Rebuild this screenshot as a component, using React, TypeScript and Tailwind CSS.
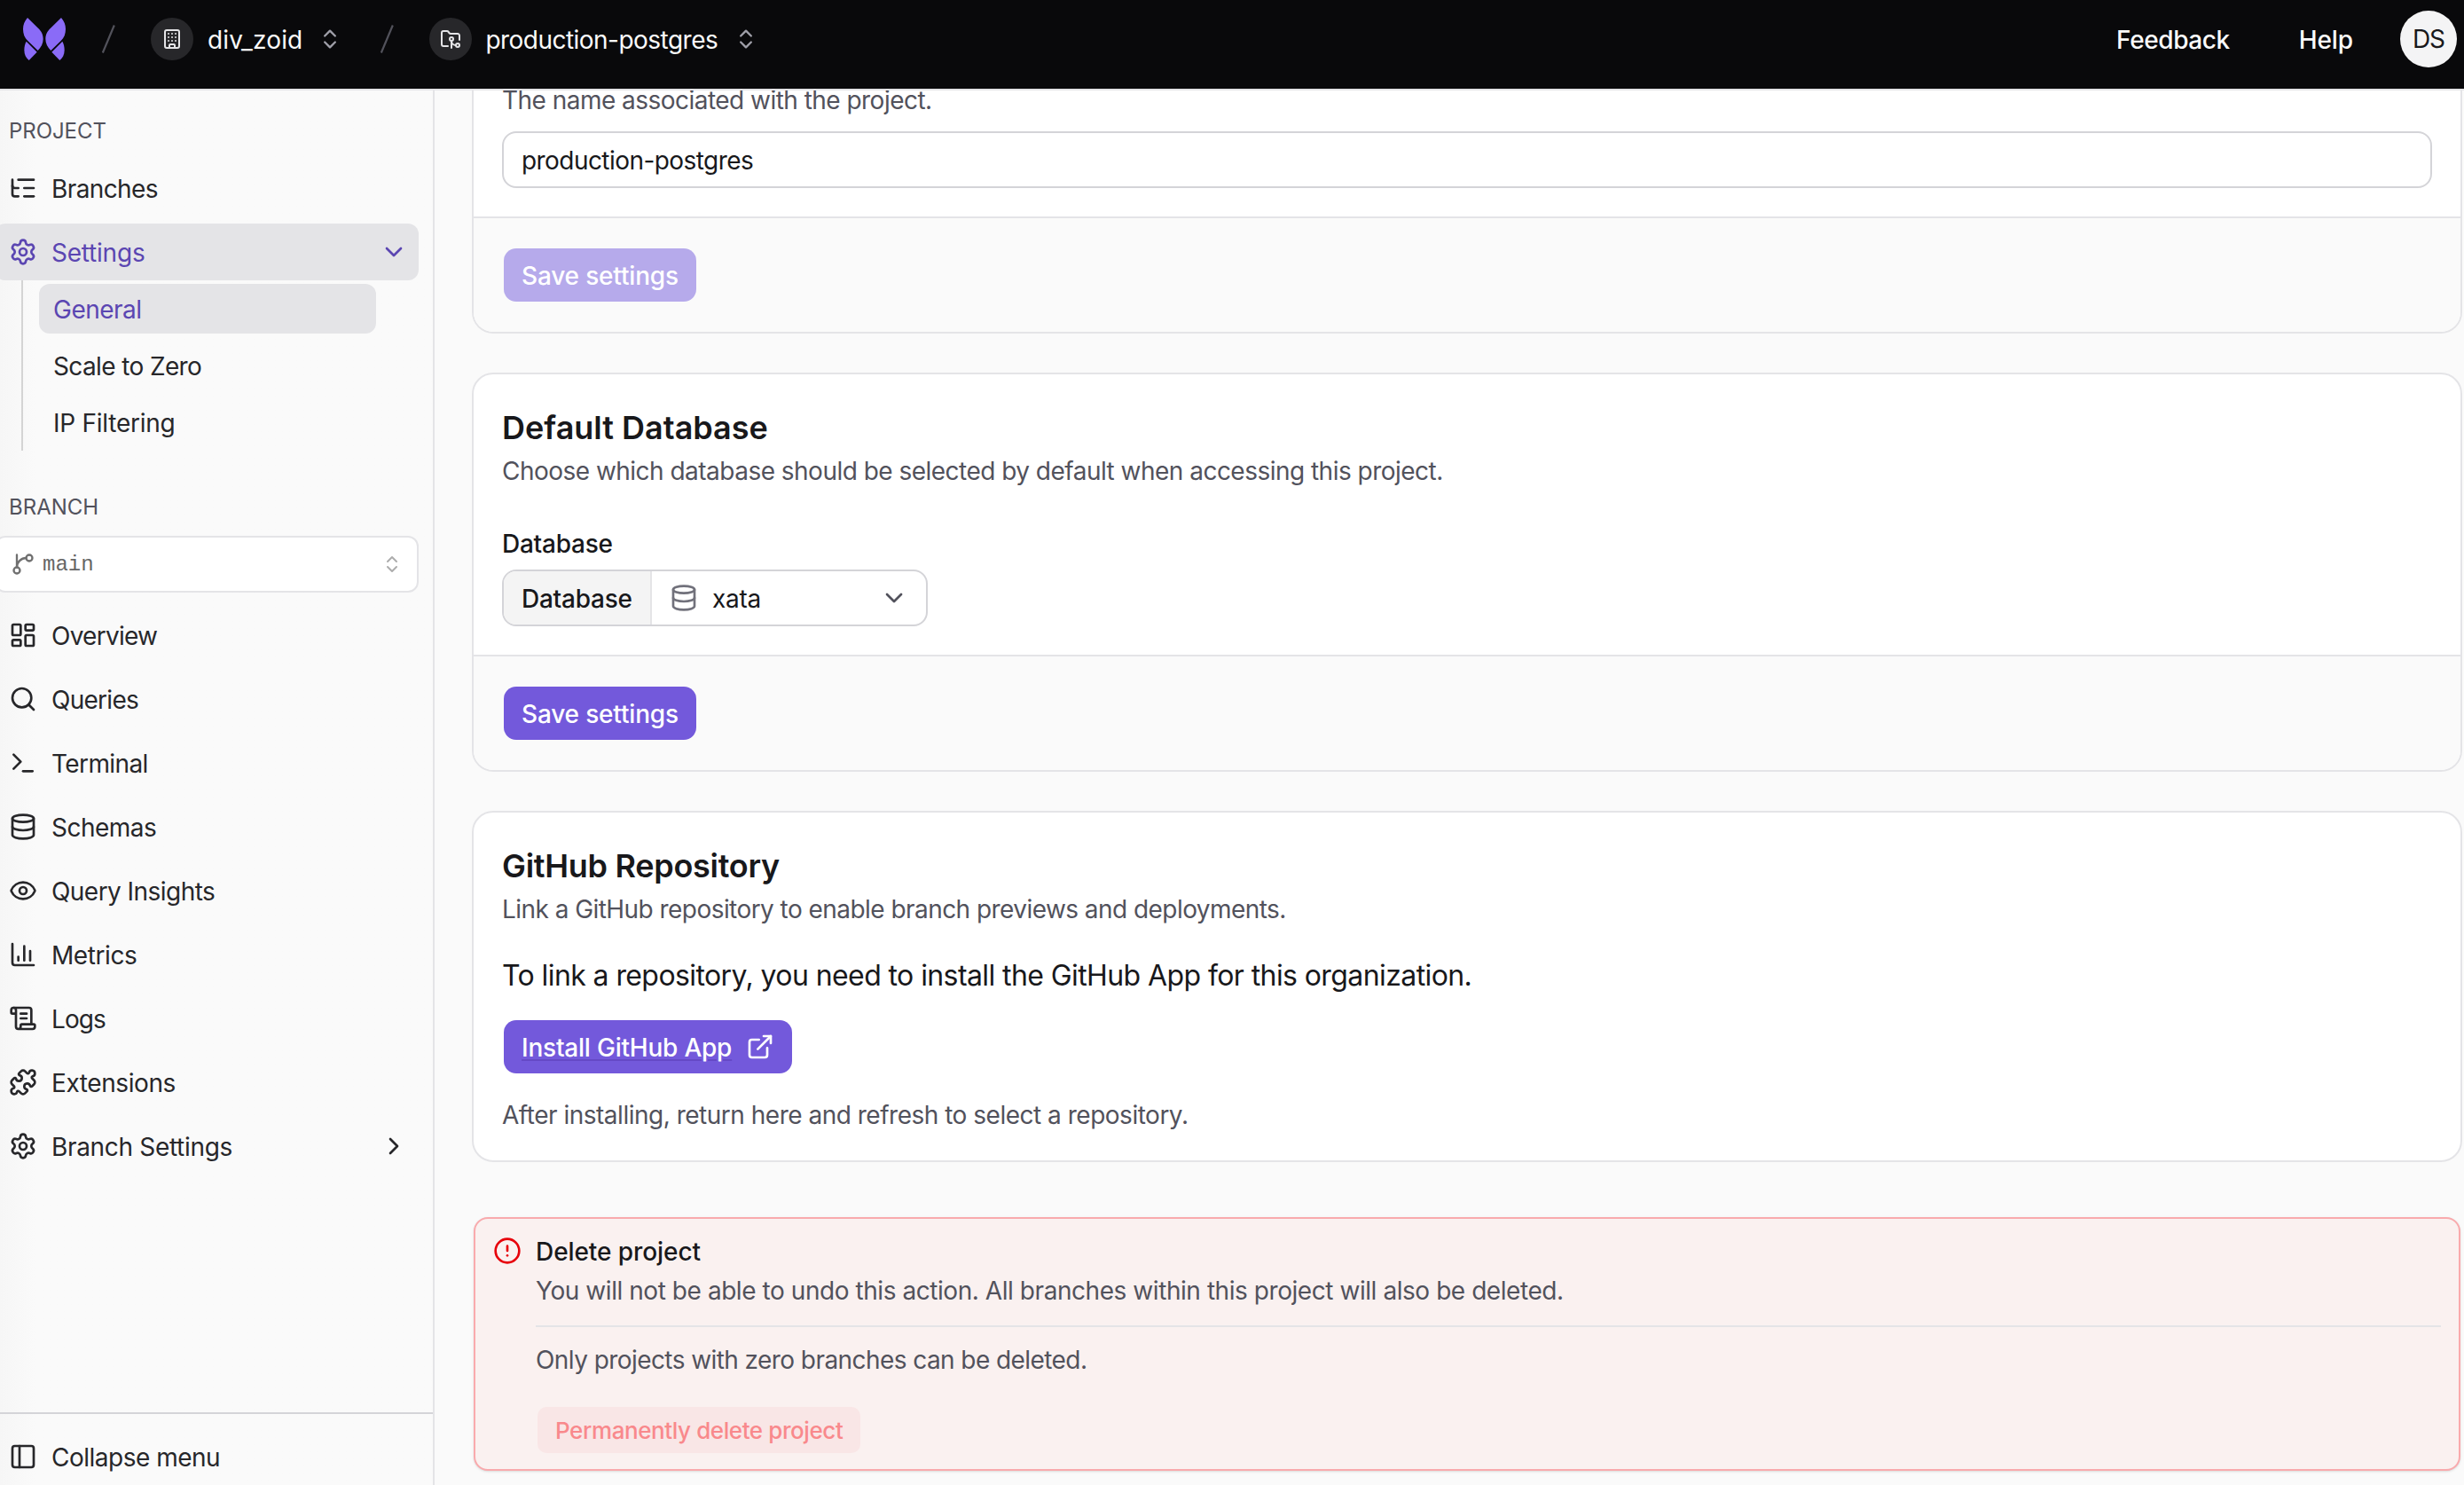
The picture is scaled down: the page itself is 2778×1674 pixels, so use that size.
import type { ReactNode } from "react";
import {
  Building,
  ChevronDown,
  ChevronRight,
  CircleAlert,
  Database,
  ExternalLink,
  Eye,
  FolderGit2,
  LayoutDashboard,
  ListTree,
  PanelLeft,
  Puzzle,
  ScrollText,
  Search,
  Settings,
  type LucideIcon,
} from "lucide-react";

function Logo() {
  return (
    <svg viewBox="48 30 144 144" className="size-12 shrink-0" fill="#8a6bf7">
      <path d="M63 30C53 42 48 54 48 68C48 84 53 98 64 108L98 141C109 130 116 117 116 102C116 86 110 76 99 65Z" />
      <path d="M177 30C187 42 192 54 192 68C192 84 187 98 176 108L142 141C131 130 124 117 124 102C124 86 130 76 141 65Z" />
      <path d="M59 110L95 146L68 174C58 166 52 154 52 140C52 128 54 119 59 110Z" />
      <path d="M181 110L145 146L172 174C182 166 188 154 188 140C188 128 186 119 181 110Z" />
    </svg>
  );
}

function Slash() {
  return (
    <svg viewBox="0 0 16 32" className="h-8 w-4 shrink-0" fill="none" stroke="#52525b" strokeWidth="2.2">
      <path d="M1.8 31.5L14.8 0.5" />
    </svg>
  );
}

function UpDown({ className }: { className: string }) {
  return (
    <svg viewBox="0 0 24 24" className={className} fill="none" stroke="currentColor" strokeWidth="2" strokeLinecap="round" strokeLinejoin="round">
      <path d="m7 15 5 5 5-5" />
      <path d="m7 9 5-5 5 5" />
    </svg>
  );
}

function BranchIcon() {
  return (
    <svg viewBox="0 0 24 24" className="size-7 shrink-0 text-[#707070]" fill="none" stroke="currentColor" strokeWidth="2" strokeLinecap="round" strokeLinejoin="round">
      <path d="M15 6a9 9 0 0 0-9 9V3" />
      <circle cx="18" cy="6" r="3" />
      <circle cx="6" cy="18" r="3" />
    </svg>
  );
}

function makeIcon(body: ReactNode): LucideIcon {
  const Icon = ({ className }: { className?: string }) => (
    <svg viewBox="0 0 24 24" className={className} fill="none" stroke="currentColor" strokeWidth="2" strokeLinecap="round" strokeLinejoin="round">
      {body}
    </svg>
  );
  return Icon as unknown as LucideIcon;
}

const TerminalIcon = makeIcon(
  <>
    <path d="M12 19h8" />
    <path d="m4 17 6-6-6-6" />
  </>,
);

const ChartIcon = makeIcon(
  <>
    <path d="M3 3v16a2 2 0 0 0 2 2h16" />
    <path d="M18 17V9" />
    <path d="M13 17V5" />
    <path d="M8 17v-3" />
  </>,
);

function Header() {
  return (
    <header className="flex h-[102px] shrink-0 items-center border-b-2 border-[#e4e4e7] bg-[#09090b] pr-2 pb-3 pl-[26px] text-[28px] text-[#fafafa]">
      <Logo />
      <div className="ml-10 flex items-center gap-10">
        <Slash />
        <div className="flex items-center">
          <span className="grid size-12 place-items-center rounded-full bg-[#27272a]">
            <Building className="size-6 text-[#e4e4e7]" />
          </span>
          <span className="ml-4 pt-px tracking-[0.18px]">div_zoid</span>
          <UpDown className="ml-[17px] size-7 text-[#9f9fa9]" />
        </div>
      </div>
      <div className="ml-[42px] flex items-center gap-10">
        <Slash />
        <div className="flex items-center">
          <span className="grid size-12 place-items-center rounded-full bg-[#27272a]">
            <FolderGit2 className="size-6 text-[#e4e4e7]" />
          </span>
          <span className="ml-[15px] pt-px tracking-[-0.53px]">production-postgres</span>
          <UpDown className="ml-[18px] size-7 text-[#9f9fa9]" />
        </div>
      </div>
      <nav className="ml-auto flex items-center font-medium">
        <a className="pt-px tracking-[-0.41px]">Feedback</a>
        <a className="ml-[78px] pt-px tracking-[-0.12px]">Help</a>
        <span className="ml-[53px] grid size-16 place-items-center rounded-full bg-[#f4f4f5] font-normal tracking-[-1.2px] text-[#18181b]">
          DS
        </span>
      </nav>
    </header>
  );
}

function NavRow({
  icon: Icon,
  label,
  tracking,
  active = false,
  trailing: Trailing,
}: {
  icon: LucideIcon;
  label: string;
  tracking: string;
  active?: boolean;
  trailing?: LucideIcon;
}) {
  return (
    <a className={`-ml-1.5 flex h-16 items-center rounded-xl pr-3 pl-4 ${active ? "bg-[#e4e4e7] text-[#5b46b2]" : "text-[#27272a]"}`}>
      <Icon className="size-8 shrink-0" />
      <span className={`ml-4 pt-0.5 ${tracking}`}>{label}</span>
      {Trailing && <Trailing className="ml-auto size-8" />}
    </a>
  );
}

function Sidebar() {
  return (
    <aside className="flex w-[490px] shrink-0 flex-col border-r-2 border-[#e4e4e7] bg-linear-to-r from-[#f6f6f6] to-[#fafafa] to-[40px] text-[28px]">
      <div className="flex flex-col pt-[30px] pr-4">
        <h2 className="pl-2.5 text-2xl leading-8 tracking-[-0.05px] text-[#52525c]">PROJECT</h2>
        <div className="mt-4 flex flex-col gap-2">
          <NavRow icon={ListTree} label="Branches" tracking="tracking-[-0.6px]" />
          <NavRow icon={Settings} label="Settings" tracking="tracking-[-0.22px]" active trailing={ChevronDown} />
        </div>
        <div className="ml-6 flex flex-col gap-2 border-l-2 border-[#d4d4d4] py-1 pr-12 pl-[18px] text-[#27272a]">
          <a className="flex h-14 items-center rounded-xl bg-[#e4e4e7] pt-px pl-4 tracking-[-0.5px] text-[#5b46b2]">General</a>
          <a className="flex h-14 items-center pt-px pl-4 tracking-[-0.62px]">Scale to Zero</a>
          <a className="flex h-14 items-center pt-px pl-4 tracking-[-0.25px]">IP Filtering</a>
        </div>
        <h2 className="mt-12 pl-2.5 text-2xl leading-8 text-[#52525c]">BRANCH</h2>
        <button className="mt-4 -ml-1.5 flex h-16 items-center rounded-xl border-2 border-[#e4e4e7] bg-white pr-4 pl-4">
          <BranchIcon />
          <span className="ml-2 pt-0.5 font-['Liberation_Mono',monospace] text-2xl text-[#666666]">main</span>
          <UpDown className="ml-auto size-6 text-[#adadad]" />
        </button>
        <div className="mt-4 flex flex-col gap-2">
          <NavRow icon={LayoutDashboard} label="Overview" tracking="tracking-[-0.75px]" />
          <NavRow icon={Search} label="Queries" tracking="tracking-[-0.73px]" />
          <NavRow icon={TerminalIcon} label="Terminal" tracking="tracking-[-0.6px]" />
          <NavRow icon={Database} label="Schemas" tracking="tracking-[-0.52px]" />
          <NavRow icon={Eye} label="Query Insights" tracking="tracking-[-0.55px]" />
          <NavRow icon={ChartIcon} label="Metrics" tracking="tracking-[-0.42px]" />
          <NavRow icon={ScrollText} label="Logs" tracking="tracking-[-0.93px]" />
          <NavRow icon={Puzzle} label="Extensions" tracking="tracking-[-0.42px]" />
          <NavRow icon={Settings} label="Branch Settings" tracking="tracking-[-0.32px]" trailing={ChevronRight} />
        </div>
      </div>
      <div className="mt-auto flex h-[82px] flex-col border-t-2 border-[#d4d4d8] pt-4">
        <NavRow icon={PanelLeft} label="Collapse menu" tracking="tracking-[-0.5px]" />
      </div>
    </aside>
  );
}

function Card({ className = "", children }: { className?: string; children: ReactNode }) {
  return <section className={`overflow-hidden border-2 border-[#e4e4e7] bg-white ${className}`}>{children}</section>;
}

function SaveFooter({ disabled = false }: { disabled?: boolean }) {
  return (
    <div className="border-t-2 border-[#e4e4e7] bg-[#fafafa] px-[34px] py-[34px]">
      <button
        className={`flex h-[60px] w-[217px] items-center rounded-[14px] pt-px pl-5 font-medium tracking-[-0.17px] text-white ${disabled ? "bg-[#b6aaeb]" : "bg-[#7359db]"}`}
      >
        Save settings
      </button>
    </div>
  );
}

function CardHeading({ title, tracking, children }: { title: string; tracking: string; children: ReactNode }) {
  return (
    <>
      <h3 className={`text-4xl leading-[48px] font-semibold ${tracking}`}>{title}</h3>
      {children}
    </>
  );
}

function MainContent() {
  return (
    <main className="flex min-w-0 flex-1 flex-col overflow-hidden bg-[#fafafa] pr-0.5 pl-[42px] text-[28px] leading-10 text-[#18181b]">
      <Card className="rounded-b-3xl border-t-0">
        <div className="-mt-[9px] px-8 pb-8">
          <p className="tracking-[-0.53px] text-[#52525c]">The name associated with the project.</p>
          <div className="mt-[15px] flex h-16 items-center rounded-2xl border-2 border-[#d4d4d8] bg-white pt-px pl-5 tracking-[-0.56px]">
            production-postgres
          </div>
        </div>
        <SaveFooter disabled />
      </Card>

      <Card className="mt-11 rounded-3xl">
        <div className="px-8 pt-9 pb-8">
          <CardHeading title="Default Database" tracking="tracking-[0px]">
            <p className="mt-[5px] tracking-[-0.52px] text-[#52525c]">
              Choose which database should be selected by default when accessing this project.
            </p>
          </CardHeading>
          <p className="mt-[42px] font-medium tracking-[-0.25px]">Database</p>
          <div className="mt-[9px] flex h-16 w-[480px] overflow-hidden rounded-2xl border-2 border-[#d4d4d8] bg-white">
            <div className="flex w-[167px] items-center border-r-2 border-[#e4e4e7] bg-[#f4f4f4] pt-px pl-5 font-medium tracking-[-0.25px]">
              Database
            </div>
            <div className="flex flex-1 items-center pr-5 pl-5">
              <Database className="size-8 text-[#71717b]" />
              <span className="ml-4 pt-px tracking-[-0.27px]">xata</span>
              <ChevronDown className="ml-auto size-8 text-[#52525c]" />
            </div>
          </div>
        </div>
        <SaveFooter />
      </Card>

      <Card className="mt-11 rounded-3xl">
        <div className="px-8 pt-9 pb-8">
          <CardHeading title="GitHub Repository" tracking="tracking-[-0.29px]">
            <p className="mt-[5px] tracking-[-0.55px] text-[#52525c]">Link a GitHub repository to enable branch previews and deployments.</p>
          </CardHeading>
          <p className="mt-[31px] text-[32px] leading-[48px] tracking-[-0.59px]">
            To link a repository, you need to install the GitHub App for this organization.
          </p>
          <a className="mt-[26px] ml-0.5 flex h-[60px] w-[325px] items-center justify-between rounded-[14px] bg-[#7359db] pr-5 pl-5 font-medium text-white">
            <span className="pt-px tracking-[-0.22px] underline decoration-[#6549c6] decoration-2 underline-offset-3">Install GitHub App</span>
            <ExternalLink className="size-8" />
          </a>
          <p className="mt-[27px] -mb-px tracking-[-0.49px] text-[#52525c]">After installing, return here and refresh to select a repository.</p>
        </div>
      </Card>

      <section className="mx-0.5 mt-[62px] flex gap-4 rounded-2xl border-2 border-[#f9aaad] bg-[#faf1f0] px-5 pt-4 pb-[18px] shadow-sm">
        <CircleAlert className="mt-1 size-8 shrink-0 text-[#e7000b]" />
        <div className="flex-1 pt-px">
          <h3 className="font-medium tracking-[-0.08px]">Delete project</h3>
          <p className="mt-1 tracking-[-0.44px] text-[#52525c]">
            You will not be able to undo this action. All branches within this project will also be deleted.
          </p>
          <hr className="mt-[19px] border-t-2 border-[#e4e4e7]" />
          <p className="mt-[17px] tracking-[-0.57px] text-[#52525c]">Only projects with zero branches can be deleted.</p>
          <button className="mt-[33px] ml-0.5 flex h-[52px] w-[364px] items-center rounded-[10px] bg-[#f9e6e6] pt-px pl-5 text-[26px] font-medium tracking-[-0.41px] text-[#f9898c]">
            Permanently delete project
          </button>
        </div>
      </section>
    </main>
  );
}

export default function App() {
  return (
    <div className="flex h-[1674px] w-[2778px] flex-col overflow-hidden bg-[#fafafa] font-['Inter',sans-serif]">
      <Header />
      <div className="flex min-h-0 flex-1">
        <Sidebar />
        <MainContent />
      </div>
    </div>
  );
}
